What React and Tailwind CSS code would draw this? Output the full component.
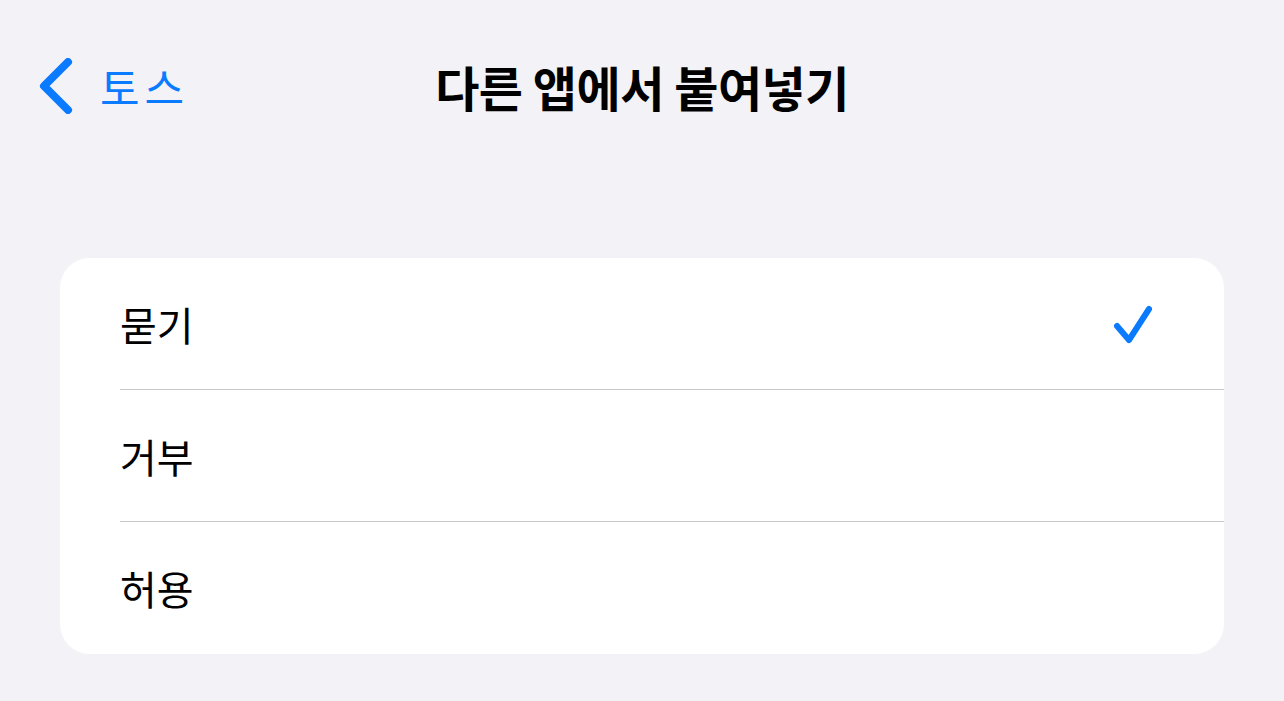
import React, { useState } from "react";

const FONT = { fontFamily: '"Noto Sans CJK KR", "Noto Sans", sans-serif' };

const options = ["묻기", "거부", "허용"];

export default function App() {
  const [selected, setSelected] = useState("묻기");

  return (
    <div className="min-h-screen w-full bg-[#f2f2f7] text-black" style={FONT}>
      {/* NAV BAR */}
      <header className="grid h-[172px] grid-cols-[1fr_auto_1fr] items-center">
        <button className="flex items-center gap-[27px] pl-[39px] text-[#0a7aff]">
          <svg width="34" height="56" viewBox="0 0 34 56" fill="none">
            <path
              d="M29 4 L5 28 L29 52"
              stroke="currentColor"
              strokeWidth="8"
              strokeLinecap="round"
              strokeLinejoin="round"
            />
          </svg>
          <span className="text-[43px] leading-none tracking-[5px]">토스</span>
        </button>
        <h1 className="text-[48px] font-bold leading-none tracking-[-0.5px]">
          다른 앱에서 붙여넣기
        </h1>
        <div />
      </header>

      {/* OPTIONS */}
      <section className="mx-[60px] mt-[86px] overflow-hidden rounded-[30px] bg-white">
        {options.map((label, i) => (
          <div key={label} className="pl-[60px]">
            <button
              onClick={() => setSelected(label)}
              className={
                "flex w-full items-center justify-between pr-[70px] " +
                (i === 2 ? "h-[132px]" : "h-[131px]")
              }
            >
              <span className="text-[40px] leading-none">{label}</span>
              {selected === label && (
                <svg width="42" height="40" viewBox="0 0 42 40" fill="none" className="text-[#0a7aff]">
                  <path
                    d="M5 22 L17 36 L37 5"
                    stroke="currentColor"
                    strokeWidth="6"
                    strokeLinecap="round"
                    strokeLinejoin="round"
                  />
                </svg>
              )}
            </button>
            {i < options.length - 1 && <div className="h-px bg-[#c8c8cc]" />}
          </div>
        ))}
      </section>
    </div>
  );
}
